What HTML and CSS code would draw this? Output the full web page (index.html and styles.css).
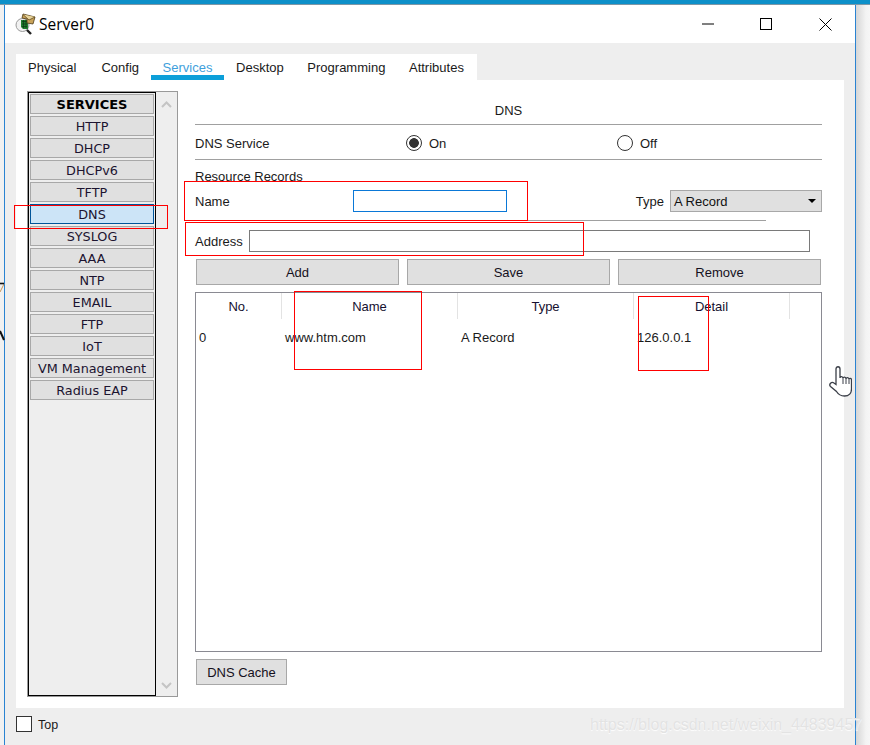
FILE: index.html
```html
<!DOCTYPE html>
<html lang="en">
<head>
<meta charset="utf-8">
<title>Server0</title>
<link rel="stylesheet" href="styles.css">
</head>
<body>
<div class="desktop">
  <div class="strip"></div>
  <svg class="backdrop-marks" width="6" height="100" viewBox="0 0 6 100" aria-hidden="true">
    <path d="M0 37 L4 29" stroke="#c9965a" stroke-width="1" fill="none"/>
    <path d="M0 28.500 H4" stroke="#111" stroke-width="1.600" fill="none"/>
    <path d="M0 76 L4 85" stroke="#111" stroke-width="2" fill="none"/>
  </svg>
  <div class="window">
    <header class="titlebar">
      <svg class="app-icon" width="22" height="22" viewBox="0 0 22 22" aria-hidden="true">
        <path d="M11 15 L17 21" stroke="#222" stroke-width="2.400"/>
        <circle cx="8.500" cy="12" r="6.500" fill="#f1f1f1" stroke="#9a9a9a"/>
        <path d="M7 7 H14 V16 H9 L7 14 Z" fill="#1f7d2e"/>
        <path d="M8 8.500 H13 M8 11 H13 M8 13.500 H13 M9.500 7 V15 M12 7 V15" stroke="#0a3a12" stroke-width=".7"/>
        <path d="M9 1 L21 4 L19 11 L13 10 V6 L8 5 Z" fill="#c9a35a" stroke="#4d3a14" stroke-width=".8"/>
        <path d="M9 1.500 L15 7 L21 4" fill="#e8d49a" stroke="#4d3a14" stroke-width=".7"/>
      </svg>
      <span class="title">Server0</span>
      <div class="controls">
        <svg width="12" height="2" viewBox="0 0 12 2" class="ctl-min" aria-hidden="true"><path d="M0 1 H12" stroke="#000"/></svg>
        <svg width="12" height="12" viewBox="0 0 12 12" class="ctl-max" aria-hidden="true"><rect x=".5" y=".5" width="11" height="11" fill="none" stroke="#000"/></svg>
        <svg width="13" height="13" viewBox="0 0 13 13" class="ctl-close" aria-hidden="true"><path d="M.5 .5 L12.500 12.500 M12.500 .5 L.5 12.500" stroke="#000"/></svg>
      </div>
    </header>

    <div class="window-body">
      <nav class="tabs">
        <span class="tab tab-first">Physical</span>
        <span class="tab">Config</span>
        <span class="tab tab-active">Services</span>
        <span class="tab">Desktop</span>
        <span class="tab">Programming</span>
        <span class="tab">Attributes</span>
      </nav>

      <section class="panel">
        <aside class="sidebar">
          <div class="service-list">
            <div class="svc svc-head">SERVICES</div>
            <div class="svc">HTTP</div>
            <div class="svc">DHCP</div>
            <div class="svc">DHCPv6</div>
            <div class="svc">TFTP</div>
            <div class="svc svc-active">DNS</div>
            <div class="svc">SYSLOG</div>
            <div class="svc">AAA</div>
            <div class="svc">NTP</div>
            <div class="svc">EMAIL</div>
            <div class="svc">FTP</div>
            <div class="svc">IoT</div>
            <div class="svc">VM Management</div>
            <div class="svc">Radius EAP</div>
          </div>
          <div class="scrollbar">
            <svg width="11" height="7" viewBox="0 0 11 7" aria-hidden="true"><path d="M1 6 L5.500 1.500 L10 6" fill="none" stroke="#c4c4c4" stroke-width="2"/></svg>
            <svg width="11" height="7" viewBox="0 0 11 7" aria-hidden="true"><path d="M1 1 L5.500 5.500 L10 1" fill="none" stroke="#c4c4c4" stroke-width="2"/></svg>
          </div>
        </aside>

        <main class="content">
          <div class="heading">DNS</div>
          <div class="service-row">
            <span class="service-label">DNS Service</span>
            <span class="radio radio-on"></span><span class="radio-text on-text">On</span>
            <span class="radio radio-off"></span><span class="radio-text">Off</span>
          </div>
          <div class="records-title">Resource Records</div>
          <div class="field-row">
            <span class="name-label">Name</span>
            <div class="input input-focus"></div>
            <span class="type-label">Type</span>
            <div class="select"><span>A Record</span><span class="caret"></span></div>
          </div>
          <div class="divider"></div>
          <div class="field-row address-row">
            <span class="address-label">Address</span>
            <div class="input input-wide"></div>
          </div>
          <div class="actions">
            <div class="btn">Add</div>
            <div class="btn">Save</div>
            <div class="btn">Remove</div>
          </div>
          <div class="table">
            <div class="thead">
              <div class="th">No.</div>
              <div class="th">Name</div>
              <div class="th">Type</div>
              <div class="th">Detail</div>
              <div class="th th-last"></div>
            </div>
            <div class="tr">
              <div class="td">0</div>
              <div class="td">www.htm.com</div>
              <div class="td">A Record</div>
              <div class="td">126.0.0.1</div>
              <div class="td"></div>
            </div>
          </div>
          <div class="btn btn-cache">DNS Cache</div>
        </main>
      </section>

      <footer class="footer">
        <span class="checkbox"></span>
        <span class="top-label">Top</span>
      </footer>
    </div>
  </div>
  <div class="shadow"></div>

  <div class="mark mark-dns"></div>
  <div class="mark mark-name"></div>
  <div class="mark mark-address"></div>
  <div class="mark mark-col-name"></div>
  <div class="mark mark-col-detail"></div>

  <svg class="cursor" width="23" height="31" viewBox="0 0 23 31" aria-hidden="true">
    <path d="M7 3 C7 0 11 0 11 3 V12 C11 10 14 10 14 12.500 C14 10.500 17 10.500 17 13 C17 11 20 11 20 13.500 C20 12 22.500 12 22.500 14 V23 C22.500 27 20 30 15.500 30 C11 30 9 28 7.500 25.500 L1.500 20.500 C-0.500 18.500 2.500 15 5 17 L7 18.500 Z" fill="#fff" stroke="#3b3f48" stroke-width="1.300"/>
    <path d="M14 12.500 V18 M17 13 V18 M20 13.500 V18" stroke="#3b3f48" stroke-width="1"/>
  </svg>

  <div class="watermark">https://blog.csdn.net/weixin_44839457</div>
</div>
</body>
</html>
```

FILE: styles.css
```css
* { box-sizing: border-box; }
html, body { margin: 0; padding: 0; }
body {
  width: 870px;
  height: 745px;
  overflow: hidden;
  font-family: "Liberation Sans", Arial, sans-serif;
  font-size: 13px;
  color: #1a1a1a;
}
.desktop {
  position: relative;
  width: 870px;
  height: 745px;
  overflow: hidden;
  background: #f1f1f1;
  padding: 5px 0 0 4px;
}
.strip {
  position: absolute;
  left: 0;
  top: 0;
  width: 870px;
  height: 5px;
  background: #0d90c9;
  border-bottom: 1px solid #7d97a6;
}
.backdrop-marks { position: absolute; left: 0; top: 255px; }
.window {
  width: 852px;
  height: 740px;
  border-left: 1px solid #2a83d2;
  border-right: 1px solid #2a83d2;
  background: #fff;
}
.shadow {
  position: absolute;
  left: 856px;
  top: 5px;
  width: 14px;
  height: 740px;
  background: linear-gradient(to right, #d6d6d6, #f3f3f3 70%, #f6f6f6);
}

/* Title bar */
.titlebar {
  height: 38px;
  display: flex;
  align-items: center;
  padding-left: 9px;
  background: #fff;
}
.app-icon { margin-top: -1px; }
.title {
  margin-left: 3px;
  margin-top: -1px;
  font-family: "Open Sans", "Liberation Sans", sans-serif;
  font-size: 15.500px;
  color: #000;
}
.controls {
  margin-left: auto;
  display: flex;
  align-items: center;
  padding-right: 23px;
}
.ctl-min { margin-right: 46px; }
.ctl-max { margin-right: 47px; }

/* Window body */
.window-body {
  height: 702px;
  background: #eee;
  padding: 11px 11px 0;
}
.tabs {
  display: flex;
  width: 461px;
  height: 26px;
  background: #fff;
}
.tab {
  height: 26px;
  padding: 6px 11.600px 0 12px;
  line-height: 16px;
  white-space: nowrap;
  color: #1a1a1a;
}
.tab-first { padding-right: 13px; }
.tab-active {
  color: #3f9fdc;
  border-bottom: 5px solid #0c9fd9;
}
.panel {
  display: flex;
  height: 628px;
  padding: 11px 0 0 11px;
  background: #fff;
}

/* Sidebar */
.sidebar {
  display: flex;
  width: 151px;
  height: 606px;
  border: 1px solid #999;
  background: #eee;
}
.service-list {
  width: 128px;
  height: 604px;
  border: 1px solid #000;
  padding: 1px 0 0 1px;
  background: #eee;
  display: flex;
  flex-direction: column;
  gap: 2px;
}
.svc {
  width: 124px;
  height: 20px;
  flex: none;
  border: 1px solid #a8a8a8;
  background: #e0e0e0;
  text-align: center;
  line-height: 20px;
  font-family: "DejaVu Sans", Verdana, sans-serif;
  font-size: 12.800px;
  color: #1c1430;
  white-space: nowrap;
}
.svc-head { font-weight: 700; font-size: 13px; color: #000; }
.svc-active { background: #cce4f7; border-color: #005499; }
.scrollbar {
  flex: 1;
  display: flex;
  flex-direction: column;
  justify-content: space-between;
  align-items: center;
  padding: 9px 0 7px;
}

/* Main content */
.content {
  width: 627px;
  margin-left: 17px;
}
.heading {
  height: 34px;
  padding: 12px 0 0 0;
  line-height: 16px;
  text-align: center;
  border-bottom: 1px solid #a0a0a0;
}
.service-row {
  height: 35px;
  padding-top: 2px;
  display: flex;
  align-items: center;
  border-bottom: 1px solid #a0a0a0;
}
.service-label { width: 211px; }
.radio {
  width: 16px;
  height: 16px;
  border-radius: 50%;
  border: 1px solid #333;
  background: #fff;
  flex: none;
}
.radio-on {
  background: radial-gradient(circle, #333 0, #333 4.500px, #fff 5.200px);
}
.radio-text { margin-left: 7px; }
.on-text { width: 188px; }
.records-title {
  height: 30px;
  padding-top: 9px;
  line-height: 16px;
}
.field-row {
  display: flex;
  align-items: center;
  height: 22px;
}
.name-label { width: 158px; }
.input {
  height: 22px;
  border: 1px solid #7a7a7a;
  background: #fff;
}
.input-focus { width: 154px; border-color: #0a78d7; }
.type-label { margin-left: auto; margin-right: 6px; }
.select {
  width: 152px;
  height: 22px;
  display: flex;
  align-items: center;
  justify-content: space-between;
  padding: 0 4px 0 3px;
  border: 1px solid #a8a8a8;
  background: #e0e0e0;
  color: #111;
}
.caret {
  width: 0;
  height: 0;
  border-left: 4px solid transparent;
  border-right: 4px solid transparent;
  border-top: 4px solid #000;
  margin-right: 1px;
}
.divider {
  width: 571px;
  height: 1px;
  margin-top: 8px;
  background: #a0a0a0;
}
.address-row { margin-top: 9px; }
.address-label { width: 54px; }
.input-wide { width: 561px; }
.actions {
  display: flex;
  gap: 8px;
  margin: 7px 0 0 1px;
}
.btn {
  width: 203px;
  height: 26px;
  border: 1px solid #a8a8a8;
  background: #e0e0e0;
  text-align: center;
  line-height: 26px;
  color: #151020;
}
.btn-cache { width: 91px; margin: 7px 0 0 1px; }

/* Table */
.table {
  width: 627px;
  height: 360px;
  margin-top: 7px;
  border: 1px solid #8a8a92;
  background: #fff;
}
.thead, .tr {
  display: grid;
  grid-template-columns: 86px 176px 176px 156px 1fr;
}
.th {
  height: 26px;
  line-height: 27px;
  text-align: center;
  border-right: 1px solid #e3e3e3;
  color: #151030;
}
.th-last { border-right: 0; }
.tr { margin-top: 9px; }
.td {
  height: 20px;
  line-height: 20px;
  padding-left: 3px;
  white-space: nowrap;
}

/* Footer */
.footer {
  display: flex;
  align-items: center;
  height: 16px;
  margin: 8px 0 0;
}
.checkbox {
  width: 16px;
  height: 16px;
  border: 1px solid #333;
  background: #fff;
}
.top-label { margin: 2px 0 0 6px; font-size: 12.500px; }

/* Overlays */
.mark {
  position: absolute;
  border: 1px solid #f00;
}
.mark-dns { left: 14px; top: 205px; width: 154px; height: 24px; }
.mark-name { left: 184px; top: 181px; width: 344px; height: 40px; }
.mark-address { left: 185px; top: 222px; width: 399px; height: 34px; }
.mark-col-name { left: 294px; top: 291px; width: 128px; height: 79px; }
.mark-col-detail { left: 638px; top: 296px; width: 71px; height: 75px; }
.cursor { position: absolute; left: 829px; top: 366px; }
.watermark {
  position: absolute;
  left: 590px;
  top: 715px;
  font-size: 16px;
  line-height: 20px;
  white-space: nowrap;
  color: #e3e3e3;
  text-shadow: 0 1px 1px #fff;
}
```
